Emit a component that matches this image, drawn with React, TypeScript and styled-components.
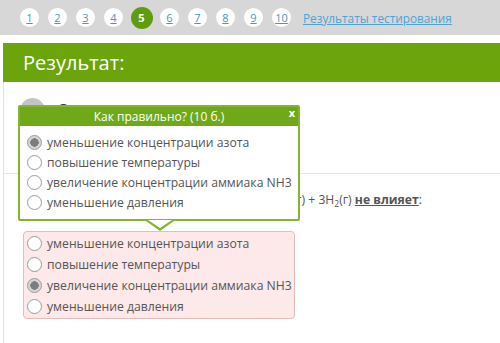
import React from 'react';
import styled, { createGlobalStyle } from 'styled-components';

const GlobalStyle = createGlobalStyle`
  body {
    margin: 0;
    background: #ffffff;
    font-family: "Open Sans", "Liberation Sans", sans-serif;
    color: #555;
  }
`;

const pages = [1, 2, 3, 4, 5, 6, 7, 8, 9, 10];
const current = 5;

const popupOptions = [
  { text: 'уменьшение концентрации азота', checked: true },
  { text: 'повышение температуры', checked: false },
  { text: 'увеличение концентрации аммиака NH3', checked: false },
  { text: 'уменьшение давления', checked: false },
];

const answerOptions = [
  { text: 'уменьшение концентрации азота', checked: false },
  { text: 'повышение температуры', checked: false },
  { text: 'увеличение концентрации аммиака NH3', checked: true },
  { text: 'уменьшение давления', checked: false },
];

const App: React.FC = () => {
  return (
    <>
      <GlobalStyle />
      <Pager>
        {pages.map((p) => (
          <PageDot key={p} $active={p === current}>
            {p}
          </PageDot>
        ))}
        <ResultsLink href="#">Результаты тестирования</ResultsLink>
      </Pager>

      <Panel>
        <Header>Результат:</Header>

        <ScoreRow>
          <ScoreCircle />
          <ScoreText>Оценка</ScoreText>
        </ScoreRow>

        <Question>
          <QuestionText>
            На смещение равновесия в такой системе N<sub>2</sub>(г) + 3H<sub>2</sub>(г) <b>не влияет</b>:
          </QuestionText>
          <AnswerBox>
            {answerOptions.map((o) => (
              <Option key={o.text}>
                <Radio $checked={o.checked} />
                {o.text}
              </Option>
            ))}
          </AnswerBox>
        </Question>

        <Popup>
          <PopupHeader>
            Как правильно? (10 б.)
            <Close>x</Close>
          </PopupHeader>
          <PopupBody>
            {popupOptions.map((o) => (
              <Option key={o.text}>
                <Radio $checked={o.checked} />
                {o.text}
              </Option>
            ))}
          </PopupBody>
        </Popup>
      </Panel>
    </>
  );
};

export default App;

// --- styled components ---
const Pager = styled.div`
  display: flex;
  align-items: center;
  gap: 9px;
  height: 35px;
  padding-left: 20px;
  background: #d7d7d7;
`;

const PageDot = styled.span<{ $active: boolean }>`
  display: flex;
  align-items: center;
  justify-content: center;
  width: ${(p) => (p.$active ? 22 : 19)}px;
  height: ${(p) => (p.$active ? 22 : 19)}px;
  margin: ${(p) => (p.$active ? '0 -1.5px' : '0')};
  border-radius: 50%;
  background: ${(p) => (p.$active ? '#5f9c0e' : '#ffffff')};
  color: ${(p) => (p.$active ? '#ffffff' : '#4a97b8')};
  font-size: 11px;
  font-weight: ${(p) => (p.$active ? 700 : 400)};
  text-decoration: ${(p) => (p.$active ? 'none' : 'underline')};
`;

const ResultsLink = styled.a`
  margin-left: 3px;
  color: #4aa5d6;
  font-size: 11.8px;
  text-decoration: underline;
`;

const Panel = styled.div`
  position: relative;
  margin: 8px 0 0 3px;
  border-left: 1px solid #e2e2e2;
  height: 300px;
`;

const Header = styled.div`
  height: 39px;
  margin-left: -1px;
  padding-left: 20px;
  background: #6ca40c;
  color: #ffffff;
  font-size: 20px;
  line-height: 39px;
`;

const ScoreRow = styled.div`
  display: flex;
  align-items: flex-start;
  gap: 12px;
  height: 75px;
  padding: 16px 0 0 16px;
  border-bottom: 1px solid #e4e4e4;
`;

const ScoreCircle = styled.div`
  width: 25px;
  height: 25px;
  border-radius: 50%;
  background: #c4c4c4;
`;

const ScoreText = styled.span`
  margin-top: 1px;
  font-size: 16px;
  font-weight: 700;
  color: #333;
`;

const Question = styled.div`
  padding: 16px 0 0 19px;
`;

const QuestionText = styled.div`
  font-size: 12.2px;
  line-height: 20px;
  color: #555;

  sub {
    font-size: 8.5px;
    line-height: 0;
  }

  b {
    font-weight: 700;
    text-decoration: underline;
  }
`;

const AnswerBox = styled.div`
  width: 264px;
  margin-top: 21px;
  padding: 1px 3px 1px;
  background: #fde9e9;
  border: 1px solid #e6bcbc;
  border-radius: 4px;
`;

const Option = styled.div`
  display: flex;
  align-items: center;
  gap: 5px;
  height: 21px;
  font-size: 12.2px;
  color: #555;
  white-space: nowrap;
`;

const Radio = styled.span<{ $checked: boolean }>`
  box-sizing: border-box;
  width: 15px;
  height: 15px;
  border-radius: 50%;
  border: 1.5px solid #9a9a9a;
  background: ${(p) =>
    p.$checked ? 'radial-gradient(circle, #7d7d7d 0 4px, #d6d6d6 4.5px)' : '#ffffff'};
  flex-shrink: 0;
`;

const Popup = styled.div`
  position: absolute;
  top: 62px;
  left: 14px;
  width: 278px;
  background: #ffffff;
  border: 2px solid #82b530;
  border-radius: 2px;

  &::before,
  &::after {
    content: '';
    position: absolute;
    left: 126px;
    border-style: solid;
    border-color: transparent;
  }

  &::before {
    bottom: -12px;
    border-width: 10px 14px 0;
    border-top-color: #82b530;
  }

  &::after {
    bottom: -9px;
    left: 128px;
    border-width: 8px 12px 0;
    border-top-color: #ffffff;
  }
`;

const PopupHeader = styled.div`
  position: relative;
  height: 19px;
  background: #6fa818;
  color: #ffffff;
  font-size: 12px;
  line-height: 19px;
  text-align: center;
`;

const Close = styled.span`
  position: absolute;
  right: 3px;
  top: -4px;
  font-size: 11px;
  font-weight: 700;
`;

const PopupBody = styled.div`
  padding: 6px 0 7px 7px;

  & > div {
    height: 20px;
  }
`;
